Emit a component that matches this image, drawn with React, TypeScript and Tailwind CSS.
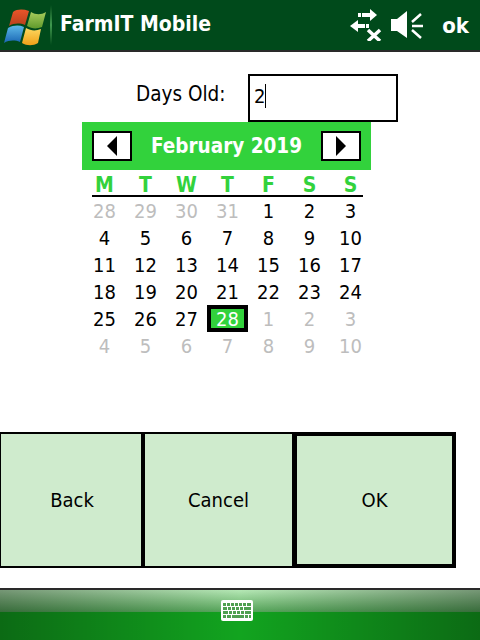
import React from 'react';

const weekDays = ['M', 'T', 'W', 'T', 'F', 'S', 'S'];

const days: { n: number; muted?: boolean; selected?: boolean }[] = [
  { n: 28, muted: true }, { n: 29, muted: true }, { n: 30, muted: true }, { n: 31, muted: true },
  { n: 1 }, { n: 2 }, { n: 3 }, { n: 4 }, { n: 5 }, { n: 6 }, { n: 7 }, { n: 8 }, { n: 9 }, { n: 10 },
  { n: 11 }, { n: 12 }, { n: 13 }, { n: 14 }, { n: 15 }, { n: 16 }, { n: 17 },
  { n: 18 }, { n: 19 }, { n: 20 }, { n: 21 }, { n: 22 }, { n: 23 }, { n: 24 },
  { n: 25 }, { n: 26 }, { n: 27 }, { n: 28, selected: true },
  { n: 1, muted: true }, { n: 2, muted: true }, { n: 3, muted: true },
  { n: 4, muted: true }, { n: 5, muted: true }, { n: 6, muted: true }, { n: 7, muted: true },
  { n: 8, muted: true }, { n: 9, muted: true }, { n: 10, muted: true },
];

function WinFlag() {
  return (
    <svg width="42" height="38" viewBox="0 0 42 38" className="shrink-0">
      <defs>
        <linearGradient id="fr" x1="0" y1="0" x2="0" y2="1">
          <stop offset="0" stopColor="#e8552a" />
          <stop offset="1" stopColor="#b8401c" />
        </linearGradient>
        <linearGradient id="fg" x1="0" y1="0" x2="0" y2="1">
          <stop offset="0" stopColor="#a8cc5c" />
          <stop offset="1" stopColor="#5f9a2c" />
        </linearGradient>
        <linearGradient id="fb" x1="0" y1="0" x2="0" y2="1">
          <stop offset="0" stopColor="#5cb8e8" />
          <stop offset="1" stopColor="#1a66b4" />
        </linearGradient>
        <linearGradient id="fy" x1="0" y1="0" x2="0" y2="1">
          <stop offset="0" stopColor="#fbd860" />
          <stop offset="1" stopColor="#f0a018" />
        </linearGradient>
      </defs>
      <path d="M9 3 C13 0 19 0 25 2 L21 16 C16 14 10 14 5 17 Z" fill="url(#fr)" />
      <path d="M27 3 C32 6 37 6 42 3 L38 18 C33 20 28 20 23 17 Z" fill="url(#fg)" />
      <path d="M4 19 C10 16 15 16 20 18 L16 33 C11 31 5 31 0 34 Z" fill="url(#fb)" />
      <path d="M22 19 C27 22 32 22 37 20 L34 34 C29 37 23 37 18 34 Z" fill="url(#fy)" />
    </svg>
  );
}

function NetworkIcon() {
  return (
    <svg width="32" height="32" viewBox="0 0 32 32" fill="white" className="shrink-0">
      <rect x="8" y="4" width="3" height="4" />
      <rect x="12" y="4" width="8" height="4" />
      <path d="M20 0 L27 6 L20 12 Z" />
      <path d="M0 17 L8 11 L8 23 Z" />
      <rect x="8" y="15" width="7" height="4" />
      <rect x="16" y="15" width="3" height="4" />
      <path d="M18 21 L30 32 M30 21 L18 32" stroke="white" strokeWidth="3.5" fill="none" />
    </svg>
  );
}

function SpeakerIcon() {
  return (
    <svg width="32" height="28" viewBox="0 0 32 28" fill="white" className="shrink-0">
      <path d="M0 8 H6 L16 0 V27 L6 20 H0 Z" />
      <path d="M21 11 L30 3 M21 15 H32 M21 19 L30 27" stroke="white" strokeWidth="2.5" fill="none" />
    </svg>
  );
}

function KeyboardIcon() {
  return (
    <svg width="32" height="21" viewBox="0 0 32 21" className="shrink-0">
      <rect x="0" y="0" width="32" height="21" rx="2" fill="white" />
      <path
        d="M2 3h3v3H2zM6 3h3v3H6zM10 3h3v3h-3zM14 3h3v3h-3zM18 3h3v3h-3zM22 3h3v3h-3zM26 3h4v3h-4z
           M2 7h4v3H2zM7 7h3v3H7zM11 7h3v3h-3zM15 7h3v3h-3zM19 7h3v3h-3zM23 7h7v3h-7z
           M2 11h5v3H2zM8 11h3v3H8zM12 11h3v3h-3zM16 11h3v3h-3zM20 11h3v3h-3zM24 11h6v3h-6z
           M2 15h3v3H2zM6 15h4v3H6zM11 15h12v3H11zM24 15h3v3h-3zM28 15h2v3h-2z"
        fill="#4f9f50"
      />
    </svg>
  );
}

function Arrow({ dir }: { dir: 'left' | 'right' }) {
  return (
    <button className="w-[40px] h-[30px] bg-white border-2 border-black flex items-center justify-center">
      <svg width="10" height="20" viewBox="0 0 10 20" fill="black">
        {dir === 'left' ? <path d="M10 0 V20 L0 10 Z" /> : <path d="M0 0 V20 L10 10 Z" />}
      </svg>
    </button>
  );
}

export default function App() {
  return (
    <div className="w-[480px] h-[640px] flex flex-col bg-white text-black overflow-hidden font-['DejaVu_Sans_Condensed','DejaVu_Sans',sans-serif]">
      <header className="h-[52px] shrink-0 bg-[#004a1b] border-b-2 border-[#2a2a2a] flex items-center text-white">
        <div className="pl-[4px] pt-[5px] flex">
          <WinFlag />
        </div>
        <div className="w-[2px] h-[40px] ml-[4px] bg-gradient-to-b from-[#004a1b] via-[#3f9a4f] to-[#004a1b]" />
        <h1 className="ml-[8px] text-[21px] font-bold flex-1">FarmIT Mobile</h1>
        <div className="flex items-center gap-[9px] pr-[11px]">
          <NetworkIcon />
          <SpeakerIcon />
          <span className="ml-[10px] text-[22px] font-bold">ok</span>
        </div>
      </header>

      <main className="flex-1 flex flex-col">
        <div className="flex items-center pt-[22px]">
          <span className="ml-[136px] w-[112px] text-[20.5px] -translate-y-[4px]">Days Old:</span>
          <div className="w-[150px] h-[48px] border-2 border-black pl-[4px] pb-[5px] flex items-center text-[20px]">
            2<span className="w-px h-[24px] bg-black" />
          </div>
        </div>

        <div className="ml-[82px] w-[289px]">
          <div className="h-[48px] bg-[#32d23c] flex items-center justify-between px-[10px]">
            <Arrow dir="left" />
            <span className="text-white font-bold text-[20.5px]">February 2019</span>
            <Arrow dir="right" />
          </div>
          <div className="grid grid-cols-7 ml-[2px] h-[25px] items-center text-[#32d23c] font-bold text-[21px] text-center">
            {weekDays.map((d, i) => (
              <span key={i}>{d}</span>
            ))}
          </div>
          <div className="h-[2px] bg-black ml-[10px] w-[271px]" />
          <div className="grid grid-cols-7 ml-[2px] auto-rows-[27px] text-[20px] text-center">
            {days.map((d, i) =>
              d.selected ? (
                <div key={i} className="border-[4px] border-black bg-[#32d23c] text-white flex items-center justify-center">
                  {d.n}
                </div>
              ) : (
                <div key={i} className={`flex items-center justify-center ${d.muted ? 'text-[#bdbdbd]' : 'text-black'}`}>
                  {d.n}
                </div>
              ),
            )}
          </div>
        </div>

        <div className="mt-auto mb-[20px] h-[136px] w-[456px] flex text-[20px]">
          <button className="w-[144px] pl-[2px] bg-[#cfebcd] border-2 border-l-[1px] border-r-[3px] border-black">Back</button>
          <button className="w-[148px] bg-[#cfebcd] border-2 border-l-[1px] border-r-0 border-black">Cancel</button>
          <button className="w-[164px] bg-[#cfebcd] border-[4px] border-l-[5px] border-black">OK</button>
        </div>
      </main>

      <footer className="h-[52px] shrink-0 border-t-2 border-[#2a2a2a] relative flex flex-col">
        <div className="h-[22px] bg-gradient-to-b from-[#b5e8b5] to-[#55a65a]" />
        <div className="flex-1 bg-[#12a41f]" />
        <div className="absolute inset-0 bg-gradient-to-r from-black/35 via-transparent to-black/35" />
        <div className="absolute left-[221px] top-[10px]">
          <KeyboardIcon />
        </div>
      </footer>
    </div>
  );
}
